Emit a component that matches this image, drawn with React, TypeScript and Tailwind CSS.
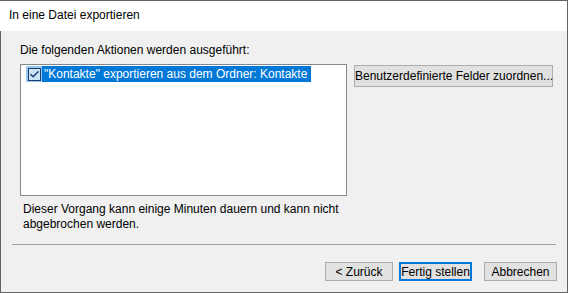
import { Check } from "lucide-react";

const font = "font-['Liberation_Sans','Noto_Sans',sans-serif]";

const Btn = ({
  children,
  className = "",
}: {
  children: React.ReactNode;
  className?: string;
}) => (
  <button
    className={`border border-[#adadad] bg-[#e1e1e1] text-[12px] leading-none text-black whitespace-nowrap ${className}`}
  >
    {children}
  </button>
);

export default function App() {
  return (
    <div className={`w-[568px] h-[293px] flex flex-col bg-white text-[12px] text-black ${font}`}>
      {/* Title bar */}
      <div className="h-[31px] shrink-0 flex items-center pl-[9px] pb-[3px] bg-white border-t border-r border-t-[#646464] border-r-[#646464]">
        <span className="text-[12px]">In eine Datei exportieren</span>
      </div>

      {/* Body */}
      <div className="flex-1 flex flex-col bg-[#f0f0f0] border-l border-r border-b border-[#646464]">
        <div className="pl-[19px] pt-[12px] leading-[15px]">
          Die folgenden Aktionen werden ausgeführt:
        </div>

        <div className="flex pl-[19px] pt-[6px] gap-[7px]">
          <div className="w-[327px] h-[132px] border border-[#828790] bg-white pt-[1px] pl-[5px]">
            <div className="flex items-center h-[16px]">
              <div className="w-[16px] h-[16px] shrink-0 bg-[#99c9ef] flex items-center justify-center">
                <div className="w-[13px] h-[13px] border border-[#1c3a6e] bg-[#cce4f7] flex items-center justify-center">
                  <Check className="w-[11px] h-[11px] text-[#1c3a6e]" strokeWidth={3} />
                </div>
              </div>
              <div className="h-[16px] bg-[#0078d7] text-white flex items-center pl-[2px] pr-[4px] whitespace-nowrap">
                "Kontakte" exportieren aus dem Ordner: Kontakte
              </div>
            </div>
          </div>
          <Btn className="w-[199px] mt-[1px] h-[22px] text-[11.5px]">Benutzerdefinierte Felder zuordnen...</Btn>
        </div>

        <div className="pl-[22px] pt-[6px] w-[345px] leading-[15px]">
          Dieser Vorgang kann einige Minuten dauern und kann nicht abgebrochen werden.
        </div>

        <div className="mx-[11px] mt-[12px] h-px bg-[#a0a0a0]" />

        <div className="flex justify-end pr-[10px] pt-[17px] gap-[6px]">
          <Btn className="w-[68px] h-[19px]">&lt; Zurück</Btn>
          <button className="w-[73px] h-[19px] border-2 border-[#0078d7] bg-[#e1e1e1] text-[12px] leading-none whitespace-nowrap mr-[6px]">
            Fertig stellen
          </button>
          <Btn className="w-[73px] h-[19px]">Abbrechen</Btn>
        </div>
      </div>
    </div>
  );
}
